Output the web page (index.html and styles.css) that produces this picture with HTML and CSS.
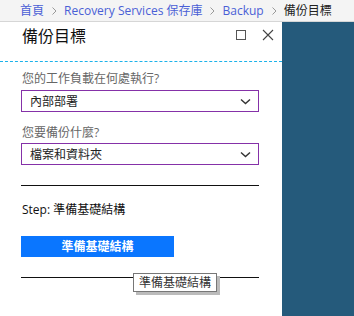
FILE: index.html
```html
<!DOCTYPE html>
<html>
<head>
<meta charset="utf-8">
<link rel="stylesheet" href="styles.css">
</head>
<body>
<div class="crumbs">
  <a class="crumb">首頁</a><svg class="sep" width="5" height="8" viewBox="0 0 5 8"><path d="M0.5 0.5L4 4L0.5 7.5" stroke="#999" stroke-width="1" fill="none"/></svg>
  <a class="crumb">Recovery Services 保存庫</a><svg class="sep" width="5" height="8" viewBox="0 0 5 8"><path d="M0.5 0.5L4 4L0.5 7.5" stroke="#999" stroke-width="1" fill="none"/></svg>
  <a class="crumb">Backup</a><svg class="sep" width="5" height="8" viewBox="0 0 5 8"><path d="M0.5 0.5L4 4L0.5 7.5" stroke="#999" stroke-width="1" fill="none"/></svg>
  <span class="current">備份目標</span>
</div>
<div class="main">
  <div class="panel">
    <div class="head">
      <div class="title">備份目標</div>
      <div class="tools">
        <svg width="12" height="12" viewBox="0 0 12 12"><rect x="1.5" y="1.5" width="9" height="9" fill="none" stroke="#555" stroke-width="1"/></svg>
        <svg width="12" height="12" viewBox="0 0 12 12"><path d="M1 1L11 11M11 1L1 11" stroke="#444" stroke-width="1.1" fill="none"/></svg>
      </div>
    </div>
    <div class="body">
      <div class="label">您的工作負載在何處執行?</div>
      <div class="select"><span>內部部署</span><svg width="11" height="7" viewBox="0 0 11 7"><path d="M1 1.5L5.5 5.5L10 1.5" stroke="#333" stroke-width="1.4" fill="none"/></svg></div>
      <div class="label second">您要備份什麼?</div>
      <div class="select"><span>檔案和資料夾</span><svg width="11" height="7" viewBox="0 0 11 7"><path d="M1 1.5L5.5 5.5L10 1.5" stroke="#333" stroke-width="1.4" fill="none"/></svg></div>
      <div class="rule first"></div>
      <div class="step">Step: 準備基礎結構</div>
      <div class="btn">準備基礎結構</div>
      <div class="rule last"></div>
      <div class="tip">準備基礎結構</div>
    </div>
  </div>
  <div class="side"></div>
</div>
</body>
</html>
```
FILE: styles.css
```css
html, body {
  margin: 0;
  padding: 0;
}
body {
  width: 354px;
  height: 316px;
  overflow: hidden;
  background: #fff;
  font-family: "Open Sans", "Noto Sans CJK TC", sans-serif;
}
.crumbs {
  height: 21px;
  border-bottom: 1px solid #d6d6d6;
  background: #f4f4f4;
  padding-left: 20px;
  font-size: 12px;
  line-height: 20px;
  white-space: nowrap;
  display: flex;
  align-items: center;
}
.crumb {
  color: #4a5fd6;
}
.sep {
  margin: 0 7px 0 8px;
  flex: none;
}
.current {
  color: #222;
}
.main {
  display: flex;
  height: 294px;
}
.panel {
  width: 282px;
  background: #fff;
  position: relative;
}
.side {
  flex: 1;
  background: #255a7b;
}
.head {
  height: 39px;
  display: flex;
  justify-content: space-between;
  align-items: flex-start;
  border-bottom: 1px dashed #1cb2ea;
}
.title {
  padding-left: 22px;
  padding-top: 3px;
  font-size: 16px;
  line-height: 20px;
  color: #111;
  font-family: "Noto Sans CJK TC", sans-serif;
}
.tools {
  display: flex;
  gap: 15px;
  padding-top: 7px;
  padding-right: 8px;
}
.body {
  padding: 9px 23px 0 21px;
}
.label {
  font-size: 12px;
  line-height: 16px;
  color: #666;
  margin-bottom: 3px;
  padding-left: 1px;
}
.label.second {
  margin-top: 13px;
  margin-bottom: 2px;
}
.select {
  height: 20px;
  border: 1px solid #8531a8;
  display: flex;
  align-items: center;
  justify-content: space-between;
  padding: 0 7px 0 8px;
  font-size: 12px;
  color: #222;
}
.rule {
  height: 1px;
  background: #111;
}
.rule.first {
  margin-top: 20px;
}
.step {
  margin-top: 16px;
  font-size: 12px;
  line-height: 16px;
  color: #111;
  padding-left: 1px;
}
.btn {
  margin-top: 18px;
  width: 153px;
  height: 21px;
  background: #0a76ff;
  color: #fff;
  font-weight: bold;
  font-size: 12px;
  line-height: 21px;
  text-align: center;
}
.rule.last {
  margin-top: 20px;
}
.tip {
  position: absolute;
  left: 133px;
  top: 251px;
  width: 82px;
  height: 17px;
  border: 1px solid #777;
  background: #fff;
  box-shadow: 3px 3px 0 #bbb;
  font-size: 12px;
  line-height: 17px;
  color: #333;
  text-align: center;
}
```
